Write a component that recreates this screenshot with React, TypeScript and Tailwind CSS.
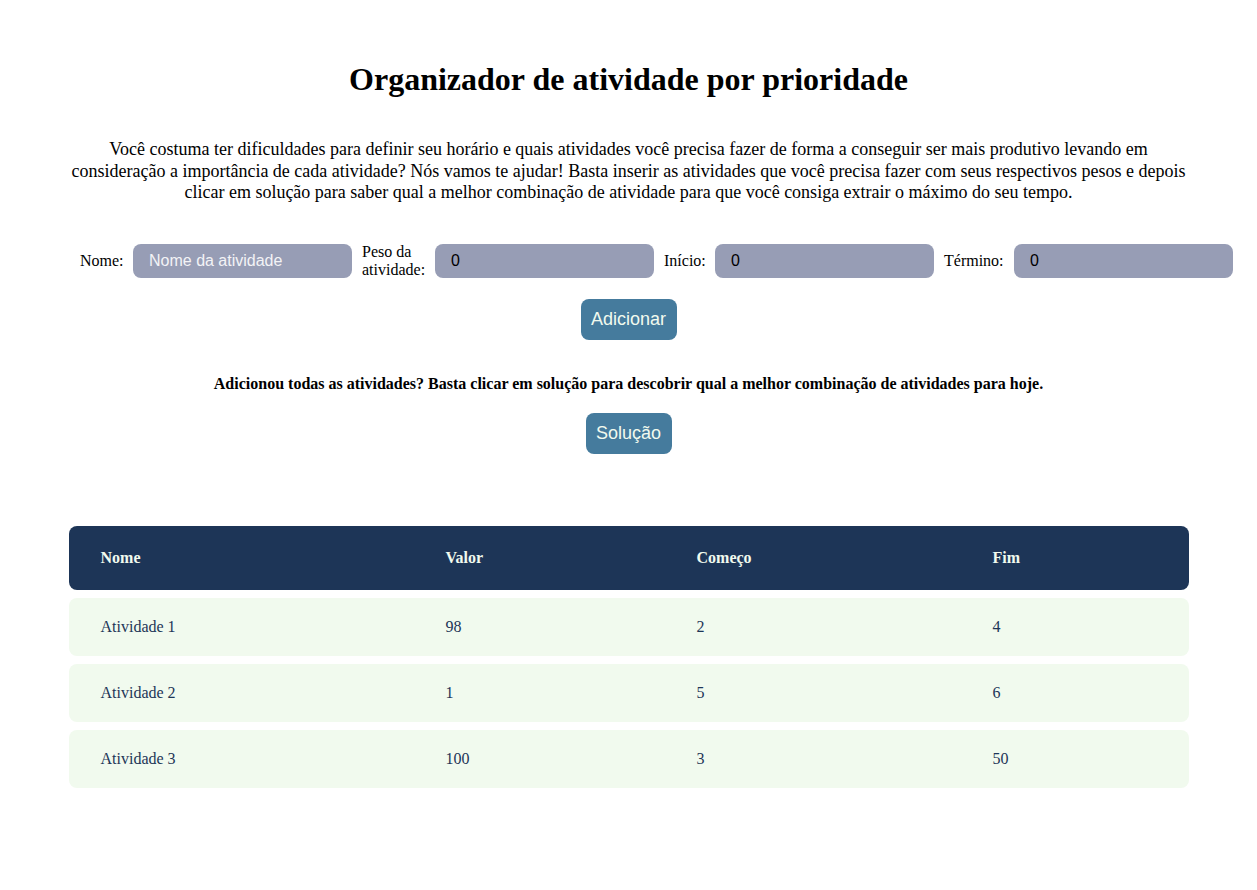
import { useState } from "react";

type Atividade = {
  nome: string;
  valor: number;
  inicio: number;
  fim: number;
};

const atividadesIniciais: Atividade[] = [
  { nome: "Atividade 1", valor: 98, inicio: 2, fim: 4 },
  { nome: "Atividade 2", valor: 1, inicio: 5, fim: 6 },
  { nome: "Atividade 3", valor: 100, inicio: 3, fim: 50 },
];

const cols = "grid grid-cols-[345px_251px_296px_1fr] items-center pl-8";

function Campo({
  label,
  labelWidth,
  value,
  placeholder,
}: {
  label: string;
  labelWidth: string;
  value?: string;
  placeholder?: string;
}) {
  return (
    <div className="flex items-center">
      <label className={`${labelWidth} text-[16px] leading-[18px]`}>{label}</label>
      <input
        className="ml-[10px] mr-[10px] h-[34px] w-[219px] rounded-lg bg-[#979db5] px-4 font-['Liberation_Sans',Arial,sans-serif] text-[16px] text-black outline-none placeholder:text-[#f3f3f6]"
        defaultValue={value}
        placeholder={placeholder}
      />
    </div>
  );
}

export default function App() {
  const [atividades] = useState<Atividade[]>(atividadesIniciais);

  return (
    <div className="min-h-[890px] bg-white pt-[61px] font-['Liberation_Serif','Times_New_Roman',serif] text-black">
      <h1 className="text-center text-[32px] font-bold leading-[37px]">
        Organizador de atividade por prioridade
      </h1>

      <p className="mx-auto mt-[41px] max-w-[1120px] text-center text-[18px] leading-[21.5px]">
        Você costuma ter dificuldades para definir seu horário e quais atividades você precisa fazer de forma a
        conseguir ser mais produtivo levando em consideração a importância de cada atividade? Nós vamos te ajudar!
        Basta inserir as atividades que você precisa fazer com seus respectivos pesos e depois clicar em solução
        para saber qual a melhor combinação de atividade para que você consiga extrair o máximo do seu tempo.
      </p>

      <div className="mt-[39px] flex items-center pl-[80px]">
        <Campo label="Nome:" labelWidth="w-[43px]" placeholder="Nome da atividade" />
        <Campo label="Peso da atividade:" labelWidth="w-[63px]" value="0" />
        <Campo label="Início:" labelWidth="w-[41px]" value="0" />
        <Campo label="Término:" labelWidth="w-[60px]" value="0" />
      </div>

      <div className="mt-[20px] flex justify-center">
        <button className="h-[41px] w-[96px] rounded-lg bg-[#457b9d] font-['Liberation_Sans',Arial,sans-serif] text-[18px] text-[#f1faee]">
          Adicionar
        </button>
      </div>

      <p className="mt-[35px] text-center text-[16px] font-bold leading-[18px]">
        Adicionou todas as atividades? Basta clicar em solução para descobrir qual a melhor combinação de atividades
        para hoje.
      </p>

      <div className="mt-[20px] flex justify-center">
        <button className="h-[41px] w-[86px] rounded-lg bg-[#457b9d] font-['Liberation_Sans',Arial,sans-serif] text-[18px] text-[#f1faee]">
          Solução
        </button>
      </div>

      <div className="mx-auto mt-[72px] flex max-w-[1120px] flex-col gap-2">
        <div className={`${cols} h-[64px] rounded-lg bg-[#1d3557] text-[16px] font-bold text-[#f1faee]`}>
          <span>Nome</span>
          <span>Valor</span>
          <span>Começo</span>
          <span>Fim</span>
        </div>
        {atividades.map((a) => (
          <div key={a.nome} className={`${cols} h-[58px] rounded-lg bg-[#f1faee] text-[16px] text-[#1d3557]`}>
            <span>{a.nome}</span>
            <span>{a.valor}</span>
            <span>{a.inicio}</span>
            <span>{a.fim}</span>
          </div>
        ))}
      </div>
    </div>
  );
}
